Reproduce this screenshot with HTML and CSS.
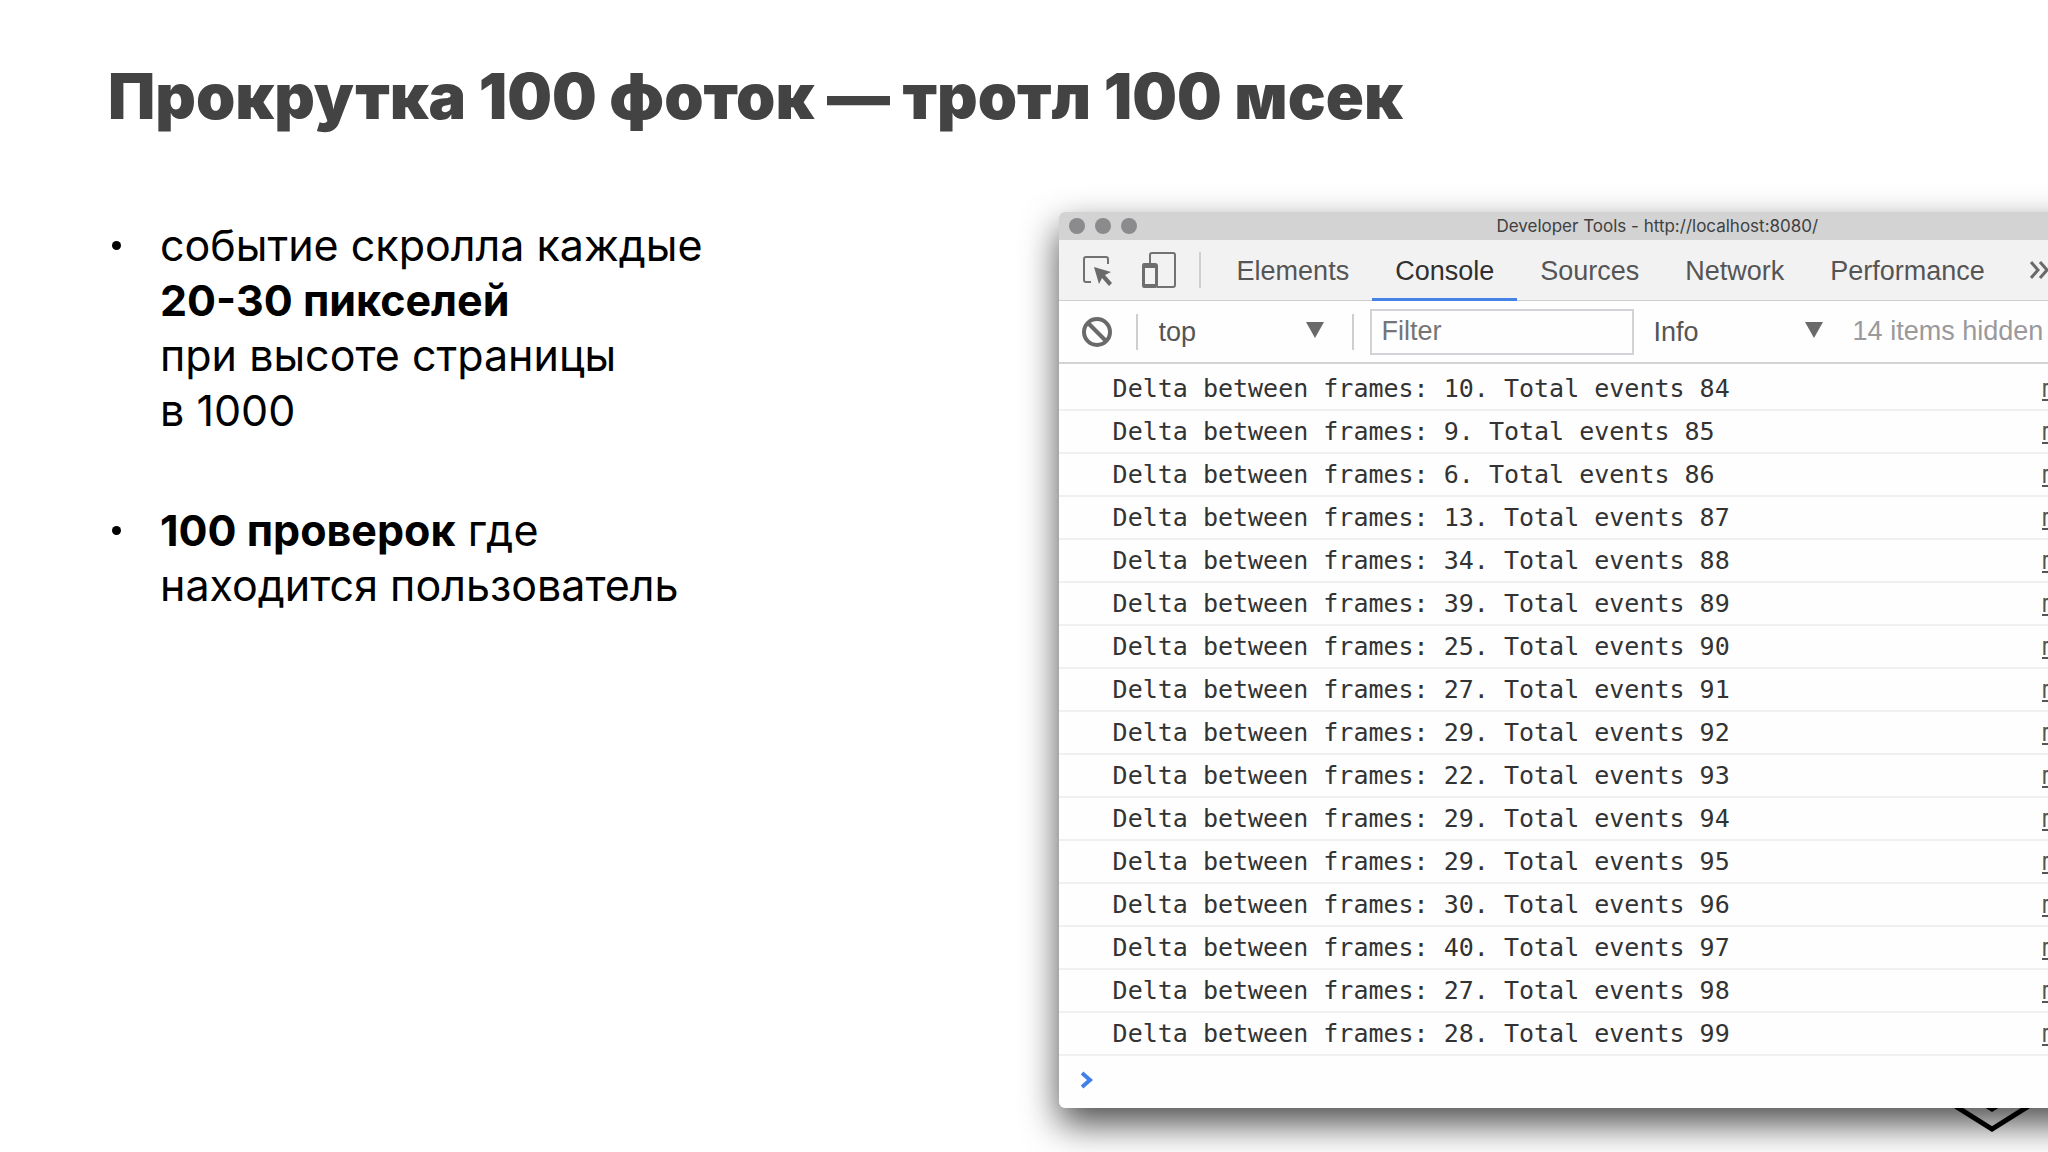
FILE: index.html
```html
<!DOCTYPE html>
<html lang="ru">
<head>
  <meta charset="UTF-8">
  <meta name="viewport" content="width=device-width, initial-scale=1.0">
  <title>Прокрутка 100 фоток — тротл 100 мсек</title>
  <link rel="stylesheet" href="styles.css">
</head>
<body>
  <main class="slide">
    <h1>Прокрутка 100 фоток — тротл 100 мсек</h1>

    <svg class="logo" viewBox="0 0 76 84" aria-hidden="true">
      <path d="M38 3 73 24V58L38 80 3 58V24Z M38 22 57 34V48L38 60 19 48V34Z" fill="none" stroke="#000" stroke-width="5"/>
    </svg>

    <div class="columns">
      <ul class="points">
        <li><p>событие скролла каждые<br><b>20-30 пикселей</b><br>при высоте страницы<br>в 1000</p></li>
        <li><p><b>100 проверок</b> где<br>находится пользователь</p></li>
      </ul>

      <section class="devtools">
        <header class="titlebar">
          <div class="lights"><i></i><i></i><i></i></div>
          <span>Developer Tools - http://localhost:8080/</span>
        </header>

        <nav class="tabs">
          <button class="icon inspect" aria-label="Inspect">
            <svg width="30" height="32" viewBox="0 0 30 32">
              <path d="M9 28H4Q2 28 2 26V5Q2 3 4 3H24Q26 3 26 5V10" fill="none" stroke="#727272" stroke-width="2"/>
              <path d="M12 13 29 18 23 21 30 29 27 32 20 24 17 30Z" fill="#6a6a6a"/>
            </svg>
          </button>
          <button class="icon device" aria-label="Device toolbar">
            <svg width="36" height="38" viewBox="0 0 36 38">
              <path d="M9 12V4Q9 2 11 2H32Q34 2 34 4V34Q34 36 32 36H16" fill="none" stroke="#727272" stroke-width="2"/>
              <path d="M3 12H14Q17 12 17 15V34Q17 37 14 37H3Q1 37 1 34V15Q1 12 3 12ZM4 17V33H14V17Z" fill="#6e6e6e" fill-rule="evenodd"/>
            </svg>
          </button>
          <span class="divider"></span>
          <button class="tab">Elements</button>
          <button class="tab active">Console</button>
          <button class="tab">Sources</button>
          <button class="tab">Network</button>
          <button class="tab">Performance</button>
          <button class="icon more" aria-label="More tabs">
            <svg width="20" height="18" viewBox="0 0 20 18">
              <path d="M1 1 8 9 1 17M10 1 17 9 10 17" fill="none" stroke="#6a6a6a" stroke-width="3"/>
            </svg>
          </button>
        </nav>

        <div class="filters">
          <button class="icon clear" aria-label="Clear console">
            <svg width="30" height="30" viewBox="0 0 30 30">
              <path d="M5 5 25 25" stroke="#6a6a6a" stroke-width="4"/>
              <circle cx="15" cy="15" r="13" fill="none" stroke="#6a6a6a" stroke-width="4"/>
            </svg>
          </button>
          <span class="divider"></span>
          <label class="picker context">
            <select aria-label="Context"><option>top</option></select>
            <svg width="18" height="16" viewBox="0 0 18 16"><path d="M0 0H18L9 16Z" fill="#6a6a6a"/></svg>
          </label>
          <span class="divider"></span>
          <input type="text" placeholder="Filter" aria-label="Filter">
          <label class="picker level">
            <select aria-label="Level"><option>Info</option></select>
            <svg width="18" height="16" viewBox="0 0 18 16"><path d="M0 0H18L9 16Z" fill="#6a6a6a"/></svg>
          </label>
          <span class="hidden-count">14 items hidden</span>
        </div>

        <ol class="log">
          <li>Delta between frames: 10. Total events 84<a href="#">m</a></li>
          <li>Delta between frames: 9. Total events 85<a href="#">m</a></li>
          <li>Delta between frames: 6. Total events 86<a href="#">m</a></li>
          <li>Delta between frames: 13. Total events 87<a href="#">m</a></li>
          <li>Delta between frames: 34. Total events 88<a href="#">m</a></li>
          <li>Delta between frames: 39. Total events 89<a href="#">m</a></li>
          <li>Delta between frames: 25. Total events 90<a href="#">m</a></li>
          <li>Delta between frames: 27. Total events 91<a href="#">m</a></li>
          <li>Delta between frames: 29. Total events 92<a href="#">m</a></li>
          <li>Delta between frames: 22. Total events 93<a href="#">m</a></li>
          <li>Delta between frames: 29. Total events 94<a href="#">m</a></li>
          <li>Delta between frames: 29. Total events 95<a href="#">m</a></li>
          <li>Delta between frames: 30. Total events 96<a href="#">m</a></li>
          <li>Delta between frames: 40. Total events 97<a href="#">m</a></li>
          <li>Delta between frames: 27. Total events 98<a href="#">m</a></li>
          <li>Delta between frames: 28. Total events 99<a href="#">m</a></li>
        </ol>

        <div class="prompt">
          <svg width="12" height="18" viewBox="0 0 12 18">
            <path d="M1 2 9 9 1 16" fill="none" stroke="#4080ec" stroke-width="4"/>
          </svg>
        </div>
      </section>
    </div>
  </main>
</body>
</html>
```
FILE: styles.css
```css
* {
  box-sizing: border-box;
}

body {
  margin: 0;
  background: #fff;
  color: #000;
  overflow: hidden;
}

/* Slide */
.slide {
  position: relative;
  min-height: 100vh;
  padding-left: 108px;
  overflow: hidden;
}

h1 {
  margin: 0;
  padding-top: 56px;
  font-family: Inter, sans-serif;
  font-size: 63px;
  font-weight: 900;
  line-height: 80px;
  color: #434343;
  white-space: nowrap;
}

.logo {
  position: absolute;
  right: 18px;
  bottom: 19px;
  width: 76px;
  height: 84px;
}

.columns {
  display: grid;
  grid-template-columns: 49% 1fr;
  align-items: start;
  padding-top: 76px;
}

/* Bullet list */
.points {
  display: flex;
  flex-direction: column;
  gap: 65px;
  margin: 0;
  padding: 6px 0 0 4px;
  list-style: none;
  font-family: Inter, sans-serif;
  font-size: 43px;
  line-height: 55px;
}

.points li {
  display: flex;
  gap: 39px;
}

.points li::before {
  content: "";
  width: 9px;
  height: 9px;
  margin-top: 23px;
  border-radius: 50%;
  background: #000;
}

.points p {
  margin: 0;
  font-weight: 400;
  white-space: nowrap;
}

.points b {
  font-weight: 700;
}

/* Developer tools window, runs past the right edge of the slide */
.devtools {
  position: relative;
  margin-right: -208px;
  border-radius: 6px;
  background: #fefefe;
  box-shadow: 0 16px 36px rgba(0, 0, 0, 0.7);
  font-family: "Liberation Sans", Arial, sans-serif;
  font-size: 27px;
  color: #555;
}

.titlebar {
  display: grid;
  grid-template-columns: 1fr auto 1fr;
  align-items: center;
  height: 28px;
  padding: 0 10px;
  border-radius: 6px 6px 0 0;
  background: #d3d3d3;
  font-family: Inter, sans-serif;
  font-size: 17px;
  color: #404040;
}

.lights {
  display: flex;
  gap: 10px;
}

.lights i {
  width: 16px;
  height: 16px;
  border-radius: 50%;
  background: #8b8a8c;
}

button,
input,
select {
  margin: 0;
  border: 0;
  padding: 0;
  background: none;
  font: inherit;
  color: inherit;
}

.icon {
  display: flex;
  flex: none;
}

.divider {
  flex: none;
  width: 2px;
  height: 36px;
  background: #d0ced0;
}

.tabs {
  display: flex;
  align-items: center;
  height: 61px;
  padding-left: 23px;
  border-bottom: 1px solid #cfcdcf;
  background: #f3f2f3;
}

.device {
  margin: 0 22px 0 29px;
}

.tabs .divider {
  margin-right: 13px;
}

.tab {
  height: 61px;
  padding: 2px 23px 0;
  border-top: 3px solid transparent;
  border-bottom: 3px solid transparent;
}

.tab.active {
  border-bottom-color: #4482e6;
  color: #303030;
}

.more {
  margin-left: 22px;
}

.filters {
  display: flex;
  align-items: center;
  height: 63px;
  padding-left: 23px;
  border-bottom: 2px solid #d4d2d4;
}

.clear {
  margin-right: 24px;
}

.picker {
  display: grid;
  align-items: center;
}

.picker select,
.picker svg {
  grid-area: 1 / 1;
}

.picker select {
  appearance: none;
  padding-left: 2px;
}

.picker svg {
  justify-self: end;
  margin-bottom: 4px;
  pointer-events: none;
}

.context {
  width: 167px;
  margin: 0 28px 0 19px;
}

.filters input {
  width: 264px;
  height: 46px;
  margin: 0 18px 0 16px;
  padding: 0 10px;
  border: 2px solid #d4d2d6;
}

.filters input::placeholder {
  color: #757575;
}

.level {
  width: 171px;
  margin-right: 30px;
}

.hidden-count {
  color: #9a999b;
  white-space: nowrap;
}

/* Console output */
.log {
  margin: 0;
  padding: 4px 0 0;
  list-style: none;
  font-family: "DejaVu Sans Mono", Menlo, monospace;
  font-size: 25px;
  line-height: 41px;
  color: #333;
}

.log li {
  display: flex;
  justify-content: space-between;
  padding-left: 54px;
  border-bottom: 2px solid #f0eff1;
}

.log a {
  width: 214px;
  color: #555;
}

.prompt {
  padding: 15px 22px 19px;
}

.prompt svg {
  display: block;
}
```
